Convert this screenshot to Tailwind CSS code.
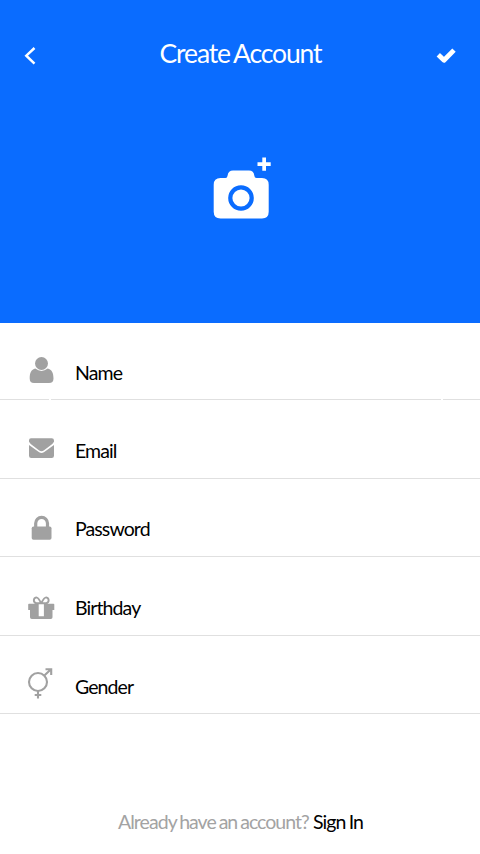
<!DOCTYPE html>
<html lang="en">
<head>
<meta charset="utf-8">
<title>Create Account</title>
<script src="https://cdn.jsdelivr.net/npm/@tailwindcss/browser@4"></script>
</head>
<body class="bg-white font-['Lato',sans-serif]">
<main class="flex h-[854px] w-[480px] flex-col overflow-hidden">
  <section class="flex h-[323px] flex-col bg-[#0a6cff] text-white">
    <header class="flex h-[106px] items-center justify-between pr-[22px] pl-[23px]">
      <svg class="h-6 w-6 translate-y-[3px]" viewBox="23 44 24 24" fill="none" stroke="currentColor" stroke-width="2.5"><path d="M34.5 48 L26.3 55.7 L34.5 63.6"/></svg>
      <h1 class="text-[26.5px] leading-8 font-normal tracking-[-1.15px] [word-spacing:-1.5px]">Create Account</h1>
      <svg class="h-6 w-6 translate-y-[3px]" viewBox="434 44 24 24" fill="none" stroke="currentColor" stroke-width="4.8" stroke-linejoin="round"><path d="M438.300 54.800 L444 60.300 L454 50.100"/></svg>
    </header>
    <svg class="mx-auto mt-[44px] h-[75px] w-[70px]" viewBox="205 150 70 75" fill="currentColor">
      <path fill-rule="evenodd" d="M220.500 178 H225.500 Q227.300 178 227.600 175.500 Q228.300 170.400 233 170.400 H249 Q253.700 170.400 254.300 175.500 Q254.600 178 256.500 178 H262 Q268.700 178 268.700 184.700 V211.800 Q268.700 218.500 262 218.500 H220.500 Q213.700 218.500 213.700 211.800 V184.700 Q213.700 178 220.500 178 Z M241 185.200 A12.800 12.800 0 1 0 241 210.800 A12.800 12.800 0 1 0 241 185.200 Z"/>
      <circle cx="241" cy="198" r="8.6"/>
      <path d="M262.300 157.500 h3.700 v4.700 h4.700 v3.700 h-4.700 v4.800 h-3.700 v-4.800 h-4.800 v-3.700 h4.800 z"/>
    </svg>
  </section>
  <section class="flex flex-col text-[19.5px] leading-6 tracking-[-0.9px] text-black">
    <div class="flex h-[77px] items-start bg-[linear-gradient(90deg,#e0e0e0_0_49px,#fff_49px_51px,#e0e0e0_51px_441px,#fff_441px_443px,#e0e0e0_443px)] bg-[length:100%_1px] bg-bottom bg-no-repeat pl-6">
      <svg class="h-[76px] w-[34px] text-[#a1a1a1]" viewBox="24 323 34 76" fill="currentColor"><circle cx="41.500" cy="363.500" r="6.500"/><path d="M35.300 368.500 Q41.500 373.300 47.700 368.500 C51.700 369.500 53.500 372.500 53.500 378.500 Q53.500 383 49 383 H34 Q29.700 383 29.700 378.500 C29.700 372.500 31.300 369.500 35.300 368.500 Z"/></svg>
      <span class="mt-[38px] ml-[17px]">Name</span>
    </div>
    <div class="flex h-[79px] items-start border-b border-[#e0e0e0] pl-6">
      <svg class="h-[78px] w-[34px] text-[#a1a1a1]" viewBox="24 400 34 78" fill="currentColor"><path d="M31 438.300 H51.700 Q54 438.300 54 440.600 V441.700 Q52.500 444.500 49 446.500 L43.700 450.500 Q41.500 452 39.200 450.500 L34 446.500 Q30.500 444.500 29 441.700 V440.300 Q29 438.300 31 438.300 Z M29 445 L39.200 452.300 Q41.500 453.700 43.900 452.300 L54 445 V455.700 Q54 458 51.700 458 H31.200 Q29 458 29 455.700 Z"/></svg>
      <span class="mt-[39px] ml-[17px]">Email</span>
    </div>
    <div class="flex h-[78px] items-start border-b border-[#e0e0e0] pl-6">
      <svg class="h-[77px] w-[34px] text-[#a1a1a1]" viewBox="24 479 34 77" fill="currentColor"><path fill="none" stroke="currentColor" stroke-width="3.200" d="M35.700 528 V523.300 A5.900 5.900 0 0 1 47.500 523.300 V528"/><rect x="31.700" y="526.500" width="19.800" height="13.300" rx="1.800"/></svg>
      <span class="mt-[38px] ml-[17px]">Password</span>
    </div>
    <div class="flex h-[79px] items-start border-b border-[#e0e0e0] pl-6">
      <svg class="h-[78px] w-[34px] text-[#a1a1a1]" viewBox="24 557 34 78" fill="currentColor"><path fill-rule="evenodd" d="M29 603.800 H53.500 Q54.300 603.800 54.300 604.600 V610 H52.500 V617.300 Q52.500 619 50.800 619 H31.800 Q30 619 30 617.300 V610 H28.200 V604.600 Q28.200 603.800 29 603.800 Z M38.700 603.800 V616.200 H43.900 V603.800 Z"/><path fill="none" stroke="currentColor" stroke-width="1.900" d="M41.200 603.300 C39 599 38 597.400 36.300 597.400 A3 3 0 0 0 36.300 603.300 H46.200 A3 3 0 0 0 46.200 597.400 C44.500 597.400 43.400 599 41.200 603.300"/></svg>
      <span class="mt-[39px] ml-[17px]">Birthday</span>
    </div>
    <div class="flex h-[78px] items-start border-b border-[#e0e0e0] pl-6">
      <svg class="h-[77px] w-[34px] text-[#a1a1a1]" viewBox="24 636 34 77" fill="none" stroke="currentColor" stroke-width="2.1"><circle cx="38" cy="682" r="9"/><path d="M44.600 675.300 L51 669.300 M45.500 669.300 H51.200 V675 M38 691 V698.500 M34.700 695 H41.300"/></svg>
      <span class="mt-[39px] ml-[17px]">Gender</span>
    </div>
  </section>
  <footer class="mt-[96px] flex pl-[118px] text-[19.5px] leading-6">
    <span class="w-[195px] whitespace-nowrap tracking-[-0.95px] text-[#a3a3a3] [word-spacing:-1.2px]">Already have an account?</span>
    <a class="tracking-[-0.9px] whitespace-nowrap text-black [word-spacing:-1px]">Sign In</a>
  </footer>
</main>
</body>
</html>
